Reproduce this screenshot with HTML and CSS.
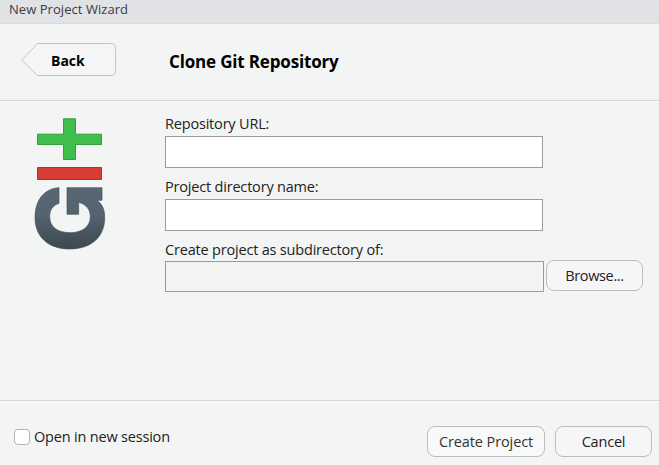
FILE: index.html
```html
<!DOCTYPE html>
<html lang="en">
<head>
<meta charset="utf-8">
<title>New Project Wizard</title>
<link rel="stylesheet" href="styles.css">
</head>
<body>
<div class="dialog">
  <div class="titlebar"><span class="t-title">New Project Wizard</span></div>
  <header class="header">
    <button class="back" type="button">
      <svg class="back-shape" width="96" height="34" viewBox="0 0 96 34" aria-hidden="true"><path d="M.7 17 16.5.5H89.500Q94.500.5 94.500 5.500V28.500Q94.500 32.500 89.500 32.500H16.500Z" fill="#f5f5f8" stroke="#c2c3c4"/></svg>
      <span class="t-back">Back</span>
    </button>
    <h1 class="heading">Clone Git Repository</h1>
  </header>
  <main class="body">
    <svg class="logo" width="74" height="134" viewBox="39 36 222 402" aria-hidden="true">
      <defs><linearGradient id="slate" x1="0" y1="0" x2="0" y2="1"><stop offset="0" stop-color="#586774"/><stop offset=".45" stop-color="#53636f"/><stop offset="1" stop-color="#3d474f"/></linearGradient></defs>
      <path d="M130.500 41.500H166.500V87.500H244.500V118.500H166.500V163.500H130.500V118.500H52.500V87.500H130.500Z" fill="#40bd4b" stroke="#2da23b" stroke-width="3"/>
      <path d="M52.500 187.500H244.500V223.500H52.500Z" fill="#d93c34" stroke="#bd2c27" stroke-width="3"/>
      <path d="M117 248V295C98 302 89 315 89 334C89 365 111 383 150 383C188 383 211 364 211 335C211 313 198 298 176 292V328H141V248H246V286H232C248 299 254 315 254 338C254 395 215 432 148 432C85 432 45 395 45 338C45 285 72 251 117 248Z" fill="url(#slate)" stroke="#45525c" stroke-width="2"/>
    </svg>
    <form class="form">
      <label class="label" for="url">Repository URL:</label>
      <input class="field" id="url" type="text">
      <label class="label" for="dir">Project directory name:</label>
      <input class="field" id="dir" type="text">
      <label class="label l-sub" for="sub">Create project as subdirectory of:</label>
      <div class="row">
        <input class="field readonly" id="sub" type="text" readonly>
        <button class="btn browse" type="button"><span>Browse...</span></button>
      </div>
    </form>
  </main>
  <footer class="footer">
    <label class="check"><input class="box" type="checkbox"><span>Open in new session</span></label>
    <button class="btn create" type="button"><span>Create Project</span></button>
    <button class="btn cancel" type="button"><span>Cancel</span></button>
  </footer>
</div>
</body>
</html>
```
FILE: styles.css
```css
* { box-sizing: border-box; }
body { margin: 0; overflow: hidden; }
body, button, input { font-family: "Open Sans", "Noto Sans", sans-serif; font-size: 14.5px; letter-spacing: -0.19px; color: #222; }
.dialog { width: 659px; height: 465px; display: flex; flex-direction: column; background: #f3f4f4; white-space: nowrap; }
.titlebar { height: 24px; padding-left: 9px; background: #e1e2e6; border-bottom: 1px solid #d9dadd; font-size: 13px; letter-spacing: 0.05px; line-height: 19px; color: #3c3c3f; }
.header { height: 77px; display: flex; align-items: flex-start; padding: 19px 0 0 21px; border-bottom: 1px solid #d5d7d7; }
.back { position: relative; width: 96px; height: 34px; padding: 0 0 0 30px; border: 0; background: none; font-size: 14px; letter-spacing: 0; font-weight: 700; color: #000; display: flex; align-items: center; }
.back-shape { position: absolute; left: 0; top: 0; }
.back span { position: relative; }
.heading { margin: 8px 0 0 52px; font-size: 17px; letter-spacing: -0.17px; line-height: 22px; font-weight: 700; color: #000; }
.body { height: 300px; display: flex; padding: 15px 0 0 33px; border-top: 1px solid #f7f8f8; border-bottom: 1px solid #d5d7d7; }
.logo { flex: none; }
.form { width: 478px; margin: -4px 0 0 58px; display: flex; flex-direction: column; }
.label { height: 23px; line-height: 22px; }
.field { width: 378px; height: 32px; flex: none; border: 1px solid #989a9b; background: #fff; margin: 0 0 8px; outline: 0; }
.l-sub { height: 22px; }
.row { display: flex; gap: 2px; align-items: flex-start; }
.readonly { width: 379px; height: 31px; background: #f2f3f3; margin: 0; }
.btn { flex: none; height: 31px; padding: 0; border: 1px solid #bcbdbf; border-radius: 8px; background: #f6f6f9; text-align: center; }
.browse { width: 97px; margin-top: -1px; letter-spacing: -0.35px; }
.footer { height: 64px; display: flex; align-items: flex-start; padding: 24px 7px 0 14px; border-top: 1px solid #fafafa; }
.check { display: flex; align-items: center; gap: 4px; margin-right: auto; height: 21px; }
.box { appearance: none; width: 16px; height: 16px; margin: 0; border: 1px solid #b2b3b5; border-radius: 4px; background: #fff; }
.create { width: 118px; background: #f8f9f9; margin-right: 10px; font-weight: 500; letter-spacing: -0.1px; color: #333; }
.cancel { width: 97px; }
```
